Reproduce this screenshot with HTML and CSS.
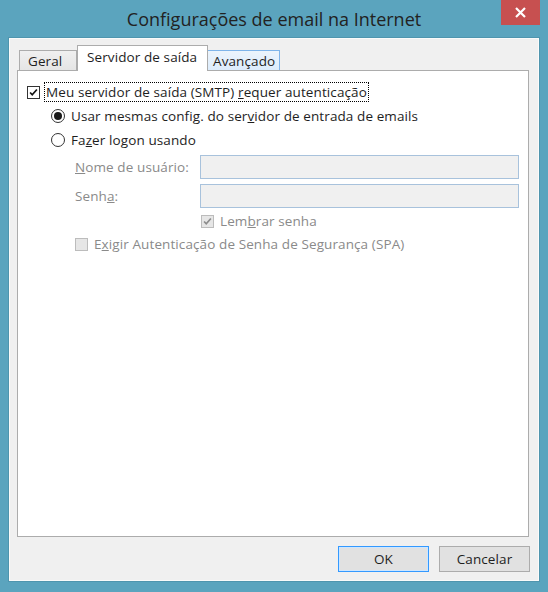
FILE: index.html
```html
<!DOCTYPE html>
<html lang="pt-BR">
<head>
<meta charset="utf-8">
<title>Configurações de email na Internet</title>
<link rel="stylesheet" href="styles.css">
</head>
<body>
<div class="window">
  <div class="titlebar">
    <div class="title">Configurações de email na Internet</div>
    <div class="close">
      <svg width="11" height="11" viewBox="0 0 11 11"><path d="M1 1 L10 10 M10 1 L1 10" stroke="#fff" stroke-width="2.2" fill="none"/></svg>
    </div>
  </div>
  <div class="client">
    <div class="tabs">
      <div class="tab t-geral">Geral</div>
      <div class="tab active">Servidor de saída</div>
      <div class="tab hover">Avançado</div>
    </div>
    <div class="panel">
      <div class="row r1">
        <span class="cb">
          <svg width="13" height="13" viewBox="0 0 13 13"><polyline points="2.5,6.5 5,9.2 10.5,3" stroke="#111" stroke-width="2" fill="none"/></svg>
        </span>
        <span class="label focus">Meu servidor de saída (SMTP) <u>r</u>equer autenticação</span>
      </div>
      <div class="row r2">
        <span class="radio on"><span class="dot"></span></span>
        <span class="label">Usar mesmas config. do ser<u>v</u>idor de entrada de emails</span>
      </div>
      <div class="row r3">
        <span class="radio"></span>
        <span class="label">Fa<u>z</u>er logon usando</span>
      </div>
      <div class="field f1">
        <span class="flabel"><u>N</u>ome de usuário:</span>
        <span class="input"></span>
      </div>
      <div class="field f2">
        <span class="flabel">Senh<u>a</u>:</span>
        <span class="input"></span>
      </div>
      <div class="row r4">
        <span class="cb dis">
          <svg width="13" height="13" viewBox="0 0 13 13"><polyline points="2.5,6.5 5,9.2 10.5,3" stroke="#8c8c8c" stroke-width="2" fill="none"/></svg>
        </span>
        <span class="label dtext">Lem<u>b</u>rar senha</span>
      </div>
      <div class="row r5">
        <span class="cb dis"></span>
        <span class="label dtext">E<u>x</u>igir Autenticação de Senha de Segurança (SPA)</span>
      </div>
    </div>
    <div class="buttons">
      <div class="btn default">OK</div>
      <div class="btn">Cancelar</div>
    </div>
  </div>
</div>
</body>
</html>
```
FILE: styles.css
```css
html, body {
  margin: 0;
  padding: 0;
}
body {
  background: #5ba4be;
  font-family: "Open Sans", "Noto Sans", sans-serif;
  color: #1e1e1e;
}
.window {
  width: 548px;
  height: 592px;
  box-sizing: border-box;
  background: #5ba4be;
  display: flex;
  flex-direction: column;
  position: relative;
}
.titlebar {
  height: 38px;
  display: flex;
  align-items: center;
  justify-content: center;
}
.title {
  font-size: 18px;
  color: #222;
  margin-top: -1px;
}
.close {
  position: absolute;
  top: 0;
  left: 501px;
  width: 39px;
  height: 25px;
  background: #c75050;
  display: flex;
  align-items: center;
  justify-content: center;
}
.client {
  margin-left: 9px;
  width: 530px;
  height: 543px;
  box-sizing: border-box;
  background: #f0f0f0;
  border: 1px solid #fafafa;
  box-shadow: 0 0 0 1px #4f95ae;
  display: flex;
  flex-direction: column;
  font-size: 13.5px;
  letter-spacing: 0.1px;
}
.tabs {
  display: flex;
  align-items: flex-end;
  height: 25px;
  margin-top: 6px;
  padding-left: 9px;
  position: relative;
  z-index: 1;
}
.tab {
  height: 20px;
  box-sizing: border-box;
  border: 1px solid #acacac;
  border-bottom: none;
  background: linear-gradient(#f0f0f0, #e5e5e5);
  padding: 1px 0 0 5px;
  line-height: 19px;
  white-space: nowrap;
}
.t-geral {
  width: 58px;
  padding-left: 8px;
}
.tab.active {
  width: 131px;
  height: 26px;
  background: #fff;
  padding: 0 0 0 9px;
  line-height: 22px;
  margin-bottom: -1px;
  position: relative;
  z-index: 2;
}
.tab.hover {
  width: 73px;
  margin-left: -1px;
  background: linear-gradient(#ecf4fc, #dcecfc);
  border-color: #7eb4ea;
  border-left-color: #acacac;
}
.panel {
  margin-left: 7px;
  width: 512px;
  height: 467px;
  box-sizing: border-box;
  background: #fff;
  border: 1px solid #acacac;
  display: flex;
  flex-direction: column;
}
.row {
  display: flex;
  align-items: center;
  height: 20px;
}
.r1 {
  margin-top: 11px;
  padding-left: 9px;
}
.r2 {
  margin-top: 4px;
  padding-left: 33px;
}
.r3 {
  margin-top: 4px;
  padding-left: 33px;
}
.cb {
  width: 13px;
  height: 13px;
  box-sizing: border-box;
  border: 1px solid #333;
  background: #fff;
  display: flex;
  align-items: center;
  justify-content: center;
  flex: none;
}
.cb svg {
  display: block;
}
.cb.dis {
  border-color: #bcbcbc;
  background: #e6e6e6;
}
.radio {
  width: 14px;
  height: 14px;
  box-sizing: border-box;
  border: 1px solid #333;
  border-radius: 50%;
  background: #fff;
  display: flex;
  align-items: center;
  justify-content: center;
  flex: none;
}
.dot {
  width: 8px;
  height: 8px;
  border-radius: 50%;
  background: #1a1a1a;
}
.label {
  margin-left: 6px;
  white-space: nowrap;
  line-height: 18px;
}
.focus {
  outline: 1px dotted #000;
  outline-offset: 0;
  padding: 0 1px;
  margin-left: 5px;
}
.field {
  display: flex;
  align-items: center;
  padding-left: 57px;
  height: 24px;
}
.f1 {
  margin-top: 5px;
}
.f2 {
  margin-top: 5px;
}
.flabel {
  width: 125px;
  color: #8a8a8a;
  white-space: nowrap;
}
.input {
  width: 319px;
  height: 24px;
  box-sizing: border-box;
  border: 1px solid #a8c2dc;
  background: #f0f0f0;
}
.dtext {
  color: #8a8a8a;
}
.r4 {
  margin-top: 3px;
  padding-left: 183px;
}
.r5 {
  margin-top: 3px;
  padding-left: 57px;
}
.buttons {
  display: flex;
  justify-content: flex-end;
  gap: 10px;
  margin-top: 9px;
  padding-right: 8px;
}
.btn {
  width: 91px;
  height: 26px;
  box-sizing: border-box;
  border: 1px solid #acacac;
  background: #e1e1e1;
  display: flex;
  align-items: center;
  justify-content: center;
}
.btn.default {
  border: 1px solid #3399ff;
  box-shadow: inset 0 0 0 1px #cde6ff;
}
```
